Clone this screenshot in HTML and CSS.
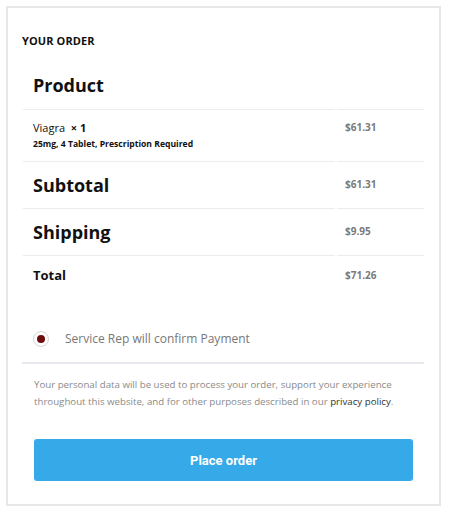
FILE: index.html
```html
<!DOCTYPE html>
<html>
<head>
<meta charset="utf-8">
<link rel="stylesheet" href="styles.css">
</head>
<body>
<div class="order">
  <h3 class="order-title">YOUR ORDER</h3>
  <table class="order-table">
    <thead>
      <tr class="head-row">
        <th class="big">Product</th>
        <th></th>
      </tr>
    </thead>
    <tbody>
      <tr class="item-row">
        <td class="item">
          <div class="item-name">Viagra&nbsp; <strong>×&nbsp;1</strong></div>
          <div class="item-meta">25mg, 4 Tablet, Prescription Required</div>
        </td>
        <td class="price">$61.31</td>
      </tr>
      <tr class="sum-row">
        <th class="big">Subtotal</th>
        <td class="price">$61.31</td>
      </tr>
      <tr class="sum-row">
        <th class="big">Shipping</th>
        <td class="price">$9.95</td>
      </tr>
      <tr class="total-row">
        <th class="total">Total</th>
        <td class="price">$71.26</td>
      </tr>
    </tbody>
  </table>

  <div class="payment">
    <label class="method">
      <span class="radio"><span class="dot"></span></span>
      <span class="method-label">Service Rep will confirm Payment</span>
    </label>
  </div>

  <p class="privacy"><span class="privacy-line">Your personal data will be used to process your order, support your experience</span> <span>throughout this website, and for other purposes described in our</span> <a class="privacy-link">privacy policy</a><span>.</span></p>

  <div class="actions">
    <button class="place">Place order</button>
  </div>
</div>
</body>
</html>
```

FILE: styles.css
```css
* { box-sizing: border-box; }
html, body { margin: 0; padding: 0; background: #fff; }
body {
  font-family: "Open Sans", "DejaVu Sans", sans-serif;
  color: #111;
  padding: 6px 8px 0 6px;
}
.order {
  border: 2px solid #e7e7e9;
  padding: 0 15px 0 14px;
  height: 500px;
}
.order-title {
  margin: 0;
  padding-top: 26px;
  font-size: 11px;
  line-height: 14px;
  font-weight: 700;
  letter-spacing: 0.1px;
  color: #111;
}
.order-table {
  margin-top: 22px;
  width: 405px;
  border-collapse: separate;
  border-spacing: 2px 0;
  margin-left: -1px;
}
.order-table th, .order-table td {
  text-align: left;
  padding: 0;
}
.head-row th { height: 39px; vertical-align: top; padding-top: 3px; }
.head-row th.big { padding-left: 10px; }
.big {
  font-size: 18px;
  font-weight: 700;
  line-height: 24px;
  color: #111;
}
.order-table tbody th, .order-table tbody td {
  border-top: 1.5px solid #ececec;
}
.item-row td { height: 52px; vertical-align: top; }
.item { padding: 10px 0 0 10px !important; width: 312px; }
.item-name { font-size: 11px; line-height: 16px; color: #111; font-weight: 500; }
.item-name strong { font-weight: 700; }
.item-meta { font-size: 8.6px; line-height: 12px; font-weight: 700; color: #111; margin-top: 2px; }
.price {
  font-size: 10px;
  font-weight: 700;
  color: #7a7a7a;
  padding-left: 8px !important;
  vertical-align: top;
}
.item-row .price { padding-top: 10px !important; }
.sum-row th, .sum-row td { height: 47px; }
.sum-row th { padding-left: 10px !important; vertical-align: middle; }
.sum-row td { vertical-align: top; padding-top: 15px !important; }
.total-row th, .total-row td { height: 38px; vertical-align: top; padding-top: 11px !important; }
.total-row th { padding-left: 10px !important; font-size: 13px; font-weight: 700; color: #111; line-height: 16px; }
.total-row td { padding-top: 12px !important; }

.payment {
  margin-top: 37px;
  border-bottom: 2px solid #e8e8ee;
  padding: 0 0 14px 11px;
}
.method { display: flex; align-items: center; gap: 16px; }
.radio {
  width: 16px; height: 16px;
  border-radius: 50%;
  border: 1px solid #d6d6d6;
  display: flex; align-items: center; justify-content: center;
  background: #fff;
}
.dot { width: 8px; height: 8px; border-radius: 50%; background: #6e0d0d; }
.method-label { font-size: 12px; color: #777; line-height: 18px; }

.privacy {
  margin: 12px 0 0 12px;
  font-size: 9.7px;
  line-height: 17px;
  color: #8a8a8a;
  width: 384px;
}
.privacy-link { color: #333; }

.actions { padding: 29px 12px 0 12px; }
.place {
  display: block;
  width: 379px;
  height: 42px;
  border: 0;
  border-radius: 3px;
  background: #36a9e9;
  color: #fff;
  font-family: Roboto, "Liberation Sans", sans-serif;
  font-size: 13px;
  font-weight: 700;
}
```
